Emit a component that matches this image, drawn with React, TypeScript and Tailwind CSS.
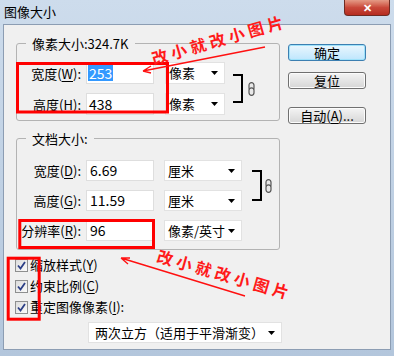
const font = "font-['Noto_Sans_CJK_SC','Liberation_Sans',sans-serif]";

const Chain = () => (
  <svg width="7" height="14" viewBox="0 0 7 14">
    <rect x="1" y="0.7" width="5" height="7.5" rx="2.5" fill="#e8e8e8" stroke="#555" strokeWidth="1.2" />
    <rect x="1" y="5.8" width="5" height="7.5" rx="2.5" fill="#e8e8e8" stroke="#555" strokeWidth="1.2" />
  </svg>
);

const Arrow = () => (
  <svg width="7" height="4" viewBox="0 0 7 4">
    <path d="M0 0H7L3.5 4Z" fill="#000" />
  </svg>
);

const Check = () => (
  <div className="w-[13px] h-[13px] border border-[#8e8f8f] bg-gradient-to-br from-[#dcdcdc] to-[#fbfbfb] flex items-center justify-center">
    <svg width="9" height="9" viewBox="0 0 9 9">
      <path d="M1 4.5L3.5 7.5L8 1" fill="none" stroke="#2c3f86" strokeWidth="1.8" />
    </svg>
  </div>
);

const Btn = ({ label, focus = false }: { label: React.ReactNode; focus?: boolean }) => (
  <div
    className={
      focus
        ? "w-[78px] h-[17px] rounded-[3px] border border-[#3c7fb1] bg-gradient-to-b from-[#eaf6fd] to-[#bee6fd] shadow-[inset_0_0_0_1px_#9fe2fa] flex items-center justify-center text-[13px] leading-none"
        : "w-[78px] h-[17px] rounded-[3px] border border-[#707070] bg-gradient-to-b from-[#f4f4f4] to-[#d6d6d6] shadow-[inset_0_0_0_1px_#fcfcfc] flex items-center justify-center text-[13px] leading-none"
    }
  >
    {label}
  </div>
);

export default function App() {
  return (
    <div className={`${font} relative w-[394px] h-[356px] overflow-hidden bg-gradient-to-b from-[#cddcec] to-[#b3c6dc] text-black flex flex-col`}>
      {/* title bar */}
      <div className="h-[24px] flex justify-between items-start">
        <span className="pl-[4px] pt-[3px] text-[13px] leading-[17px] text-black">图像大小</span>
        <div className="mr-[4px] w-[46px] h-[16px] rounded-b-[4px] border border-t-0 border-[#6e2b22] bg-gradient-to-b from-[#e49a86] via-[#c9483a] to-[#b52c1f] flex items-center justify-center text-white text-[11px] font-bold leading-none">
          ✕
        </div>
      </div>

      {/* client */}
      <div className="mx-[3px] mb-[6px] flex-1 bg-[#f0f0f0] border border-[#8c9db3] flex text-[13px]">
        <div className="pl-[12px] pt-[10px] flex flex-col w-[277px]">
          <fieldset className="w-[264px] border border-[#b3b3b3] rounded-[3px] pt-[10px] pb-[5px]">
            <legend className="ml-[9px] px-[6px] leading-[17px]">像素大小:324.7K</legend>
            <div className="flex items-center">
              <div className="flex flex-col gap-[9px]">
                <div className="flex items-center">
                  <span className="w-[64px] text-right leading-[17px]">宽度(<u className="underline-offset-2">W</u>):</span>
                  <div className="ml-[5px] w-[68px] h-[22px] bg-white border border-[#dedede] flex items-center pl-[1px]">
                    <span className="bg-[#3399ff] text-white text-[14px] leading-[16px] px-[1px]">253</span>
                  </div>
                  <div className="ml-[11px] w-[60px] h-[22px] bg-white border border-[#e2e2e2] flex items-center justify-between pl-[3px] pr-[6px]">
                    <span>像素</span>
                    <Arrow />
                  </div>
                </div>
                <div className="flex items-center">
                  <span className="w-[64px] text-right leading-[17px]">高度(<u className="underline-offset-2">H</u>):</span>
                  <div className="ml-[5px] w-[68px] h-[22px] bg-white border border-[#dedede] flex items-center pl-[2px] text-[14px]">438</div>
                  <div className="ml-[11px] w-[60px] h-[22px] bg-white border border-[#e2e2e2] flex items-center justify-between pl-[3px] pr-[6px]">
                    <span>像素</span>
                    <Arrow />
                  </div>
                </div>
              </div>
              <div className="ml-[8px] w-[10px] h-[29px] border-y-[2px] border-r-[2px] border-black" />
              <div className="ml-[5px]">
                <Chain />
              </div>
            </div>
          </fieldset>

          <fieldset className="mt-[9px] w-[264px] border border-[#b3b3b3] rounded-[3px] pt-[13px] pb-[8px]">
            <legend className="ml-[9px] px-[6px] leading-[17px]">文档大小:</legend>
            <div className="flex items-center">
              <div className="flex flex-col gap-[9px]">
                <div className="flex items-center">
                  <span className="w-[64px] text-right leading-[17px]">宽度(<u className="underline-offset-2">D</u>):</span>
                  <div className="ml-[5px] w-[68px] h-[21px] bg-white border border-[#dedede] flex items-center pl-[3px] text-[14px]">6.69</div>
                  <div className="ml-[10px] w-[78px] h-[21px] bg-white border border-[#e2e2e2] flex items-center justify-between pl-[3px] pr-[6px]">
                    <span>厘米</span>
                    <Arrow />
                  </div>
                </div>
                <div className="flex items-center">
                  <span className="w-[64px] text-right leading-[17px]">高度(<u className="underline-offset-2">G</u>):</span>
                  <div className="ml-[5px] w-[68px] h-[21px] bg-white border border-[#dedede] flex items-center pl-[3px] text-[14px]">11.59</div>
                  <div className="ml-[10px] w-[78px] h-[21px] bg-white border border-[#e2e2e2] flex items-center justify-between pl-[3px] pr-[6px]">
                    <span>厘米</span>
                    <Arrow />
                  </div>
                </div>
              </div>
              <div className="ml-[10px] w-[10px] h-[31px] border-y-[2px] border-r-[2px] border-black" />
              <div className="ml-[3px]">
                <Chain />
              </div>
            </div>
            <div className="mt-[9px] flex items-center">
              <span className="w-[64px] text-right leading-[17px]">分辨率(<u className="underline-offset-2">R</u>):</span>
              <div className="ml-[5px] w-[68px] h-[21px] bg-white border border-[#dedede] flex items-center pl-[3px] text-[14px]">96</div>
              <div className="ml-[10px] w-[78px] h-[21px] bg-white border border-[#e2e2e2] flex items-center justify-between pl-[3px] pr-[6px]">
                <span>像素/英寸</span>
                <Arrow />
              </div>
            </div>
          </fieldset>

          <div className="-ml-[1px] mt-[6px] flex flex-col gap-[3px]">
            <div className="flex items-center gap-[2px] leading-[18px]">
              <Check />
              <span>缩放样式(<u className="underline-offset-2">Y</u>)</span>
            </div>
            <div className="flex items-center gap-[2px] leading-[18px]">
              <Check />
              <span>约束比例(<u className="underline-offset-2">C</u>)</span>
            </div>
            <div className="flex items-center gap-[2px] leading-[18px]">
              <Check />
              <span>重定图像像素(<u className="underline-offset-2">I</u>):</span>
            </div>
          </div>

          <div className="ml-[72px] mt-[6px] w-[194px] h-[21px] bg-white border border-[#e2e2e2] flex items-center justify-between pl-[6px] pr-[6px]">
            <span>两次立方（适用于平滑渐变）</span>
            <Arrow />
          </div>
        </div>

        <div className="ml-[7px] pt-[19px] flex flex-col">
          <Btn label="确定" focus />
          <div className="mt-[11px]">
            <Btn label="复位" />
          </div>
          <div className="mt-[18px]">
            <Btn label={<span>自动(<u className="underline-offset-2">A</u>)...</span>} />
          </div>
        </div>
      </div>

      {/* annotations */}
      <svg className="absolute inset-0 pointer-events-none" width="394" height="356" viewBox="0 0 394 356">
        <rect x="17.5" y="63.5" width="150" height="48.5" fill="none" stroke="#ff0000" strokeWidth="3" />
        <rect x="19.8" y="220.5" width="133.7" height="27" fill="none" stroke="#ff0000" strokeWidth="3" />
        <rect x="8.2" y="258.2" width="31" height="61" fill="none" stroke="#ff0000" strokeWidth="3" />
        <path d="M265 47L143 71M143 71L151 66M143 71L151 73" fill="none" stroke="#ff1010" strokeWidth="1.4" />
        <path d="M245 296L121 258M121 258L128 264M121 258L130 258" fill="none" stroke="#ff1010" strokeWidth="1.4" />
      </svg>
      <span className="absolute left-[149px] top-[28px] w-[140px] text-center leading-[22px] text-[16px] tracking-[4px] font-bold text-[#ff1a1a] -rotate-[16deg] pointer-events-none">
        改小就改小图片
      </span>
      <span className="absolute left-[155px] top-[263px] w-[140px] text-center leading-[22px] text-[16px] tracking-[4px] font-bold text-[#ff1a1a] rotate-[16deg] pointer-events-none">
        改小就改小图片
      </span>
    </div>
  );
}
